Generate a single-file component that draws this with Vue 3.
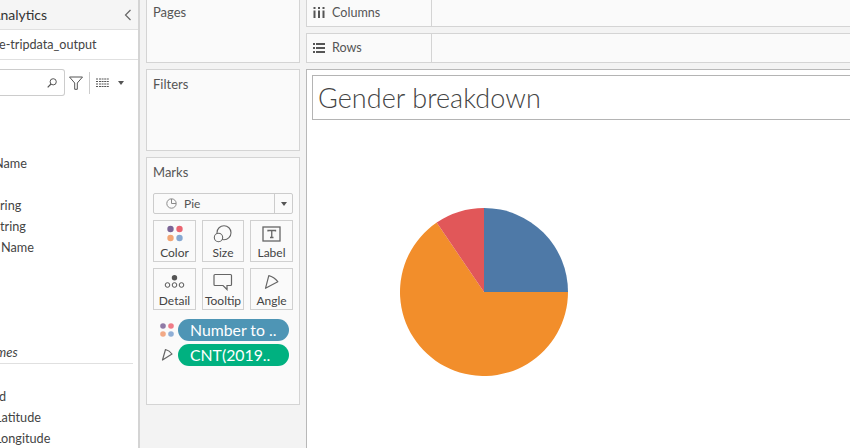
<script setup>
const fields = [
  { text: "Name", shift: -6 },
  { text: "ring", shift: 0 },
  { text: "tring", shift: 0 },
  { text: "Name", shift: 1 },
];
const measures = [
  { text: "d", shift: -1 },
  { text: "Latitude", shift: -5 },
  { text: "Longitude", shift: -5 },
];
const cards = [
  { name: "Color", icon: "color" },
  { name: "Size", icon: "size" },
  { name: "Label", icon: "label" },
  { name: "Detail", icon: "detail" },
  { name: "Tooltip", icon: "tooltip" },
  { name: "Angle", icon: "angle" },
];
</script>

<template>
  <div class="page">
    <aside class="data-pane">
      <div class="pane-head">
        <span class="pane-title">Analytics</span>
        <svg class="collapse" width="8" height="12" viewBox="0 0 8 12"><path d="M6.5 1 1.5 6l5 5" fill="none" stroke="#666" stroke-width="1.2" /></svg>
      </div>
      <div class="source">e-tripdata_output</div>
      <div class="search-row">
        <div class="search">
          <svg width="10" height="10" viewBox="0 0 10 10"><circle cx="6.2" cy="3.8" r="3.1" fill="none" stroke="#555" stroke-width="1" /><path d="M4 6 .7 9.3" stroke="#555" stroke-width="1.2" /></svg>
        </div>
        <svg class="funnel" width="14" height="14" viewBox="0 0 14 14"><path d="M.5 1h13L8.3 7v6.3H5.7V7z" fill="none" stroke="#555" stroke-width="1" /></svg>
        <span class="sep"></span>
        <svg class="list" width="13" height="10" viewBox="0 0 13 10"><path d="M0 1h2M3 1h10M0 3.5h2M3 3.5h10M0 6h2M3 6h10M0 8.5h2M3 8.5h10" stroke="#555" stroke-width="1" stroke-dasharray="2 0.6" /></svg>
        <span class="caret"></span>
      </div>
      <div class="fields">
        <div class="field first" :style="{ marginLeft: fields[0].shift + 'px' }">{{ fields[0].text }}</div>
        <div class="field gap" :style="{ marginLeft: fields[1].shift + 'px' }">{{ fields[1].text }}</div>
        <div class="field" :style="{ marginLeft: fields[2].shift + 'px' }">{{ fields[2].text }}</div>
        <div class="field" :style="{ marginLeft: fields[3].shift + 'px' }">{{ fields[3].text }}</div>
      </div>
      <div class="group-title"><span>mes</span></div>
      <div class="fields">
        <div v-for="m in measures" :key="m.text" class="field" :style="{ marginLeft: m.shift + 'px' }">{{ m.text }}</div>
      </div>
    </aside>

    <section class="cards-col">
      <div class="card pages"><h3>Pages</h3></div>
      <div class="card filters"><h3>Filters</h3></div>
      <div class="card marks">
        <h3>Marks</h3>
        <div class="mark-type">
          <div class="mark-label">
            <svg width="11" height="11" viewBox="0 0 11 11"><circle cx="5.5" cy="5.5" r="4.7" fill="none" stroke="#8a8a8a" /><path d="M5.5 5.5V1M5.5 5.5H10" stroke="#8a8a8a" /></svg>
            <span>Pie</span>
          </div>
          <div class="mark-drop"><span class="caret"></span></div>
        </div>
        <div class="mark-grid">
          <div v-for="c in cards" :key="c.name" class="mark-btn">
            <svg width="24" height="24" viewBox="0 0 24 24">
              <template v-if="c.icon === 'color'">
                <circle cx="7.5" cy="8" r="3.2" fill="#7b6496" />
                <circle cx="16.5" cy="8" r="3.2" fill="#ea6470" />
                <circle cx="7.5" cy="17" r="3.2" fill="#f2a574" />
                <circle cx="16.5" cy="17" r="3.2" fill="#86a8d2" />
              </template>
              <template v-else-if="c.icon === 'size'">
                <circle cx="13" cy="11.7" r="7" fill="none" stroke="#666" stroke-width="1.1" />
                <circle cx="7.5" cy="16.5" r="4.2" fill="#fafafa" stroke="#666" stroke-width="1.1" />
              </template>
              <template v-else-if="c.icon === 'label'">
                <rect x="3" y="6" width="17" height="14" fill="none" stroke="#666" stroke-width="1.3" />
                <path d="M8 10.5V9.5h7.5v1M11.75 9.5v7M10 16.5h3.5" fill="none" stroke="#666" stroke-width="1.3" />
              </template>
              <template v-else-if="c.icon === 'detail'">
                <circle cx="11.5" cy="8.7" r="2.7" fill="#555" />
                <circle cx="4.5" cy="16" r="2.3" fill="none" stroke="#555" />
                <circle cx="11.5" cy="16" r="2.3" fill="none" stroke="#555" />
                <circle cx="18.5" cy="16" r="2.3" fill="none" stroke="#555" />
              </template>
              <template v-else-if="c.icon === 'tooltip'">
                <path d="M4 5.5h15.5q1 0 1 1v9q0 1-1 1h-3.5v4l-4-4H4q-1 0-1-1v-9q0-1 1-1z" fill="none" stroke="#666" stroke-width="1.2" />
              </template>
              <template v-else>
                <path d="M8.8 6.7Q14 8 17.8 12.7L5.5 19.3z" fill="none" stroke="#666" stroke-width="1.2" stroke-linejoin="round" />
              </template>
            </svg>
            <span>{{ c.name }}</span>
          </div>
        </div>
        <div class="pill-row">
          <svg width="14" height="14" viewBox="0 0 14 14">
            <circle cx="3" cy="3" r="2.8" fill="#8f7aa6" />
            <circle cx="11" cy="3" r="2.8" fill="#ef7b87" />
            <circle cx="3" cy="11" r="2.8" fill="#f2a986" />
            <circle cx="11" cy="11" r="2.8" fill="#8fafd6" />
          </svg>
          <span class="pill blue">Number to ..</span>
        </div>
        <div class="pill-row">
          <svg width="14" height="14" viewBox="0 0 14 14"><path d="M5.5 1.5Q9.5 2.5 12 6L2.5 12z" fill="none" stroke="#666" stroke-width="1.2" stroke-linejoin="round" /></svg>
          <span class="pill green">CNT(2019..</span>
        </div>
      </div>
    </section>

    <main class="work">
      <div class="shelf columns">
        <div class="shelf-name">
          <svg width="12" height="11" viewBox="0 0 12 11"><path d="M1.5 3.5V11M6 3.5V11M10.5 3.5V11M1.5 0v2M6 0v2M10.5 0v2" stroke="#555" stroke-width="2" /></svg>
          <span>Columns</span>
        </div>
      </div>
      <div class="shelf rows">
        <div class="shelf-name">
          <svg width="12" height="10" viewBox="0 0 12 10"><path d="M0 1h2M3 1h9M0 5h2M3 5h9M0 9h2M3 9h9" stroke="#555" stroke-width="2" /></svg>
          <span>Rows</span>
        </div>
      </div>
      <div class="view">
        <div class="title-box">Gender breakdown</div>
        <svg class="pie" width="168" height="168" viewBox="-84 -84 168 168">
          <path d="M0 0V-84A84 84 0 0 1 84 0z" fill="#4e79a7" />
          <path d="M0 0H84A84 84 0 1 1 -47.3 -69.4z" fill="#f28e2b" />
          <path d="M0 0-47.3 -69.4A84 84 0 0 1 0 -84z" fill="#e15759" />
        </svg>
      </div>
    </main>
  </div>
</template>

<style scoped>
.page {
  display: flex;
  width: 850px;
  height: 448px;
  overflow: hidden;
  background: #f3f3f3;
  font-family: Lato, "Liberation Sans", sans-serif;
  color: #444;
  font-size: 13px;
}

.data-pane {
  width: 138px;
  flex: none;
  background: #fff;
  border-right: 2px solid #d4d4d4;
  overflow: hidden;
}

.pane-head {
  height: 29px;
  display: flex;
  align-items: center;
  justify-content: space-between;
  padding-right: 6px;
  background: #f5f5f5;
  border-bottom: 1px solid #e0e0e0;
}

.pane-title {
  margin-left: -9px;
  font-size: 14px;
  color: #333;
}

.source {
  height: 30px;
  line-height: 29px;
  margin-left: -1px;
  font-size: 12.6px;
  border-bottom: 1px solid #e0e0e0;
  box-sizing: border-box;
}

.search-row {
  display: flex;
  align-items: center;
  height: 27px;
  margin-top: 9px;
}

.search {
  width: 65px;
  height: 27px;
  box-sizing: border-box;
  border: 1px solid #ccc;
  border-left: 0;
  border-radius: 0 3px 3px 0;
  display: flex;
  align-items: center;
  justify-content: flex-end;
  padding-right: 7px;
  margin-right: 4px;
  flex: none;
}

.funnel {
  flex: none;
}

.sep {
  width: 1px;
  height: 22px;
  margin: 0 6px;
  background: #ccc;
  flex: none;
}

.list {
  flex: none;
}

.caret {
  display: inline-block;
  width: 0;
  height: 0;
  border-left: 3.5px solid transparent;
  border-right: 3.5px solid transparent;
  border-top: 4px solid #555;
}

.search-row .caret {
  margin-left: 9px;
}

.fields {
  display: flex;
  flex-direction: column;
}

.field {
  height: 21px;
  line-height: 21px;
  font-size: 12.7px;
  white-space: nowrap;
}

.field.first {
  margin-top: 57px;
}

.field.gap {
  margin-top: 21px;
}

.group-title {
  margin-top: 84px;
  height: 21px;
  line-height: 21px;
  width: 133px;
  font-style: italic;
  border-bottom: 1px solid #e0e0e0;
}

.group-title span {
  display: block;
  margin-left: -4px;
}

.group-title + .fields {
  margin-top: 22px;
}

.cards-col {
  width: 154px;
  flex: none;
  margin: 0 6px;
  display: flex;
  flex-direction: column;
  gap: 6px;
}

.card {
  background: #fafafa;
  border: 1px solid #d4d4d4;
  box-sizing: border-box;
  padding: 0 6px;
}

.card h3 {
  margin: 0;
  font-weight: 400;
  font-size: 13px;
  color: #555;
}

.pages {
  height: 64px;
  margin-top: -1px;
  padding-top: 4px;
}

.filters {
  height: 82px;
  padding-top: 6px;
}

.marks {
  height: 248px;
  padding-top: 6px;
}

.mark-type {
  margin-top: 13px;
  height: 21px;
  box-sizing: border-box;
  display: flex;
  border: 1px solid #ccc;
  border-radius: 2px;
}

.mark-label {
  flex: 1;
  display: flex;
  align-items: center;
  gap: 7px;
  padding-left: 12px;
  font-size: 12px;
  color: #555;
}

.mark-drop {
  width: 17px;
  border-left: 1px solid #ccc;
  display: flex;
  align-items: center;
  justify-content: center;
}

.mark-grid {
  display: grid;
  grid-template-columns: 43px 42px 43px;
  grid-auto-rows: 42px;
  column-gap: 6px;
  row-gap: 6px;
  margin-top: 6px;
}

.mark-btn {
  box-sizing: border-box;
  border: 1px solid #d0d0d0;
  display: flex;
  flex-direction: column;
  align-items: center;
  font-size: 12px;
  line-height: 14px;
  color: #444;
}

.mark-btn svg {
  display: block;
  margin-bottom: 1px;
}

.pill-row {
  display: flex;
  align-items: center;
  gap: 4px;
  margin: 3px 0 0 7px;
}

.mark-grid + .pill-row {
  margin-top: 9px;
}

.pill {
  width: 111px;
  height: 22px;
  line-height: 22px;
  border-radius: 11px;
  color: #fff;
  font-size: 15.8px;
  padding-left: 12px;
  box-sizing: border-box;
}

.blue {
  background: #4e95b5;
}

.green {
  background: #00b180;
}

.work {
  flex: 1;
  min-width: 0;
  display: flex;
  flex-direction: column;
  gap: 6px;
}

.shelf {
  background: #fafafa;
  border: 1px solid #d4d4d4;
  border-right: 0;
  box-sizing: border-box;
}

.shelf-name {
  width: 125px;
  height: 100%;
  box-sizing: border-box;
  border-right: 1px solid #d4d4d4;
  display: flex;
  align-items: center;
  gap: 7px;
  padding-left: 6px;
  font-size: 12.6px;
  color: #555;
}

.columns {
  height: 28px;
  margin-top: -1px;
}

.columns .shelf-name {
  padding-bottom: 2px;
}

.rows {
  height: 30px;
}

.rows .shelf-name {
  padding-bottom: 1px;
}

.view {
  flex: 1;
  background: #fff;
  border-left: 1px solid #b8b8b8;
  border-top: 1px solid #b8b8b8;
  padding: 5px 0 0 5px;
}

.title-box {
  height: 45px;
  box-sizing: border-box;
  border: 1px solid #b4b4b4;
  border-right: 0;
  line-height: 44px;
  padding-left: 5px;
  font-size: 27px;
  font-weight: 300;
  color: #444;
  letter-spacing: 0.05px;
}

.pie {
  display: block;
  margin: 88px 0 0 88px;
}
</style>
